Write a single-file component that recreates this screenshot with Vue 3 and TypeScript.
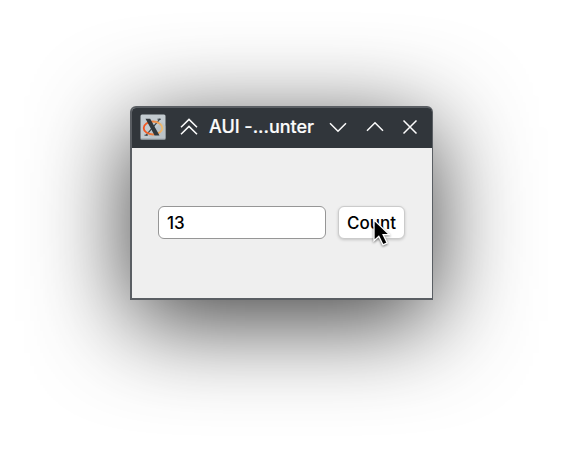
<script setup lang="ts">
import { ref } from 'vue'

const count = ref(13)
</script>

<template>
  <main class="desktop">
    <section class="window">
      <header class="titlebar">
        <svg class="app-icon" width="26" height="26" viewBox="0 0 26 26">
          <defs>
            <linearGradient id="ring" x1="0" x2="1">
              <stop offset="0" stop-color="#f4511e" />
              <stop offset="0.5" stop-color="#ee7f3c" />
              <stop offset="1" stop-color="#f0bd6c" />
            </linearGradient>
          </defs>
          <rect x="0.5" y="0.5" width="25" height="25" rx="1.5" fill="#c3cbd0" />
          <path d="M0.5 24.5h25v1h-25z" fill="#949da2" />
          <path d="M8 21 22 8 25.5 12v12.5H11z" fill="#b4bdc2" opacity=".6" />
          <path d="M20 4.8 6 21.4" stroke="#3c4347" stroke-width="1.2" fill="none" />
          <ellipse cx="13" cy="14" rx="9.3" ry="6.5" fill="none" stroke="url(#ring)" stroke-width="1.8" />
          <path d="M5.5 4.8h4.7L19.5 21.4h-4.9z" fill="#30363a" />
          <path d="M17.5 5.2h3.4M4.5 21.2h3.4" stroke="#3c4347" stroke-width="1" fill="none" />
        </svg>
        <svg class="icon shade" width="18" height="18" viewBox="0 0 18 18">
          <path d="M1 9.2 9 1.4l8 7.8M1 16.2 9 8.4l8 7.8" />
        </svg>
        <h1 class="title">AUI -...unter</h1>
        <svg class="icon minimize" width="18" height="18" viewBox="0 0 18 18">
          <path d="M1 5.2 9 13.2l8-8" />
        </svg>
        <svg class="icon maximize" width="18" height="18" viewBox="0 0 18 18">
          <path d="M1 12.8 9 4.8l8 8" />
        </svg>
        <svg class="icon close" width="18" height="18" viewBox="0 0 18 18">
          <path d="m2.5 2.5 13 13m0-13-13 13" />
        </svg>
      </header>
      <div class="content">
        <input class="field" type="text" :value="count" />
        <button class="count" type="button" @click="count++">
          Count
          <svg class="cursor" width="22" height="32" viewBox="0 0 22 32">
            <path d="M2 2v20.8l4.8-4.5 4.2 8.6 4.2-2-4.1-8.3h6.2z" />
          </svg>
        </button>
      </div>
    </section>
  </main>
</template>

<style>
body {
  background: #fff;
}
</style>

<style scoped>
.desktop {
  box-sizing: border-box;
  width: 565px;
  height: 455px;
  padding: 106px 0 0 130px;
  overflow: hidden;
  font-family: Inter, "Liberation Sans", sans-serif;
}
.window {
  box-sizing: border-box;
  display: flex;
  flex-direction: column;
  width: 303px;
  height: 194px;
  border: 2px solid #5a5e63;
  border-right-width: 1px;
  border-radius: 6px 6px 0 0;
  background: #efefef;
  box-shadow: 0 21px 96px rgba(0, 0, 0, 0.77);
}
.titlebar {
  display: flex;
  flex: none;
  align-items: center;
  height: 40px;
  padding-left: 8px;
  border-radius: 4px 4px 0 0;
  background: #31363b;
}
.app-icon {
  flex: none;
  margin-bottom: 2px;
}
.icon {
  flex: none;
  margin-bottom: 2px;
  fill: none;
  stroke: #fcfcfc;
  stroke-width: 1.5;
}
.shade {
  margin-left: 14px;
}
.title {
  flex: none;
  width: 106px;
  margin: 0 0 3px 11px;
  color: #fcfcfc;
  font-size: 18px;
  font-weight: 500;
  line-height: 23px;
  letter-spacing: -0.02px;
  white-space: nowrap;
  -webkit-text-stroke: 0.2px #fcfcfc;
}
.minimize {
  margin-left: 14px;
}
.maximize {
  margin-left: 19px;
}
.close {
  margin-left: 17px;
}
.content {
  display: flex;
  flex: 1;
  align-items: center;
  gap: 12px;
  padding: 0 0 2px 26px;
}
.field {
  box-sizing: border-box;
  width: 168px;
  height: 33px;
  padding: 1px 8px 0;
  border: 1px solid #969696;
  border-radius: 6px;
  background: #fff;
  color: #000;
  font: 500 17px/24px Inter, "Liberation Sans", sans-serif;
}
.count {
  position: relative;
  box-sizing: border-box;
  width: 67px;
  height: 33px;
  padding: 1px 0 0;
  border: 1px solid #cbcbcb;
  border-radius: 6px;
  background: #fff;
  box-shadow: 0 1px 3px rgba(0, 0, 0, 0.18);
  color: #000;
  font: 500 17px/24px Inter, "Liberation Sans", sans-serif;
}
.cursor {
  position: absolute;
  top: 11px;
  left: 33px;
  overflow: visible;
  fill: #000;
  stroke: #fff;
  stroke-width: 1.3;
  filter: drop-shadow(0 1px 1px rgba(0, 0, 0, 0.5));
}
</style>
